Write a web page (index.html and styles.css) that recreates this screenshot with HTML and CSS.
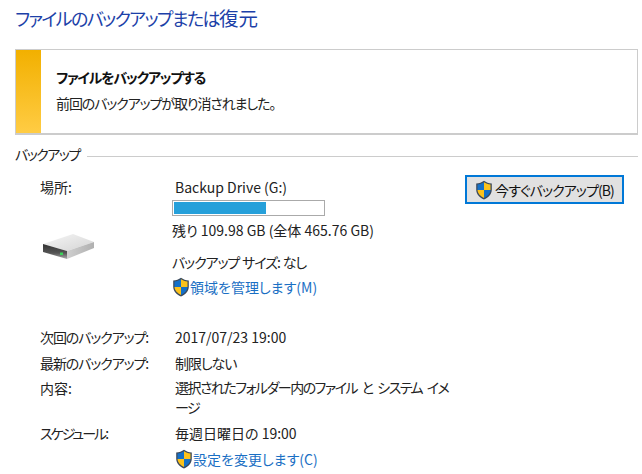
FILE: index.html
```html
<!DOCTYPE html>
<html lang="ja">
<head>
<meta charset="utf-8">
<title>ファイルのバックアップまたは復元</title>
<link rel="stylesheet" href="styles.css">
</head>
<body>
<svg class="defs" width="0" height="0">
  <defs>
    <symbol id="shield" viewBox="0 0 18 20">
      <path d="M9 .8C6.800 2.500 4.200 3.300 1.200 3.400v6.400c0 4.400 3.200 7.900 7.800 9.600 4.600-1.700 7.800-5.200 7.800-9.600V3.400C13.800 3.300 11.200 2.500 9 .8z" fill="#3c4a5c"/>
      <path d="M9 2.300C7.200 3.600 5 4.300 2.500 4.500V10H9z" fill="#1470c8"/>
      <path d="M9 2.300V10h6.500V4.500C13 4.300 10.800 3.600 9 2.300z" fill="#fcc21b"/>
      <path d="M2.500 10c.2 3.500 2.800 6.300 6.500 7.900V10z" fill="#fcc21b"/>
      <path d="M9 10v7.900c3.700-1.600 6.300-4.400 6.500-7.900z" fill="#1470c8"/>
    </symbol>
  </defs>
</svg>
<main class="page">
  <h1 class="title"><span class="title-kana">ファイルのバックアップまたは</span><span class="title-kanji">復元</span></h1>
  <section class="notice">
    <div class="stripe"></div>
    <div class="notice-body">
      <p class="notice-head">ファイルをバックアップする</p>
      <p class="notice-text">前回のバックアップが取り消されました。</p>
    </div>
  </section>
  <div class="legend"><span>バックアップ</span><i class="rule"></i></div>
  <section class="top">
    <div class="col-label">
      <div class="label">場所:</div>
      <svg class="drive" width="52" height="27" viewBox="0 0 52 27">
        <defs>
          <linearGradient id="topface" x1="0" y1="0" x2="1" y2="1">
            <stop offset="0" stop-color="#f6f6f6"/>
            <stop offset="1" stop-color="#d4d4d4"/>
          </linearGradient>
          <linearGradient id="sideface" x1="0" y1="0" x2="1" y2="0">
            <stop offset="0" stop-color="#cfcfcf"/>
            <stop offset="1" stop-color="#b0b0b0"/>
          </linearGradient>
          <linearGradient id="frontface" x1="0" y1="0" x2="0" y2="1">
            <stop offset="0" stop-color="#333"/>
            <stop offset=".6" stop-color="#555"/>
            <stop offset="1" stop-color="#aaa"/>
          </linearGradient>
        </defs>
        <path d="M0 10 30 0 51 8 24 17z" fill="url(#topface)"/>
        <path d="M0 10 24 17 24 25 0 18z" fill="url(#frontface)"/>
        <path d="M24 17 51 8 51 14 24 25z" fill="url(#sideface)"/>
        <rect x="17" y="18.500" width="3" height="2.500" fill="#3ad45a"/>
      </svg>
    </div>
    <div class="col-value">
      <div class="drive-name">Backup Drive (G:)</div>
      <div class="meter"><div class="meter-fill"></div></div>
      <div class="free">残り 109.98 GB (全体 465.76 GB)</div>
      <div class="size cond">バックアップ サイズ: なし</div>
      <a class="link" href="#"><svg class="shield" width="18" height="20"><use href="#shield"/></svg>領域を管理します(M)</a>
    </div>
    <div class="col-action">
      <button class="btn" type="button"><svg class="shield" width="18" height="20"><use href="#shield"/></svg><span class="btn-text">今すぐバックアップ(B)</span></button>
    </div>
  </section>
  <section class="rows">
    <div class="row"><div class="label cond">次回のバックアップ:</div><div class="val">2017/07/23 19:00</div></div>
    <div class="row"><div class="label cond">最新のバックアップ:</div><div class="val cond">制限しない</div></div>
    <div class="row row-tall"><div class="label">内容:</div><div class="val val-wrap">選択されたフォルダー内のファイル と システム イメージ</div></div>
    <div class="row"><div class="label cond-more">スケジュール:</div><div class="val">毎週日曜日の 19:00</div></div>
    <div class="row"><div class="label"></div><a class="link link-row" href="#"><svg class="shield" width="18" height="20"><use href="#shield"/></svg>設定を変更します(C)</a></div>
  </section>
</main>
</body>
</html>
```
FILE: styles.css
```css
* { box-sizing: border-box; }
html, body { margin: 0; padding: 0; background: #fff; }
body {
  width: 642px;
  height: 474px;
  overflow: hidden;
  color: #222;
  font-family: "Noto Sans CJK JP", "Noto Sans", sans-serif;
  font-size: 14px;
  font-feature-settings: "palt";
}
.defs { position: absolute; }
.page { padding: 0 4px 0 15px; }
.cond { letter-spacing: -1.1px; word-spacing: 1px; }
.cond-more { letter-spacing: -2px; }
.title {
  margin: 0;
  padding-top: 1px;
  height: 49px;
  line-height: 26px;
  font-weight: 400;
  color: #1c3fa8;
  white-space: nowrap;
}
.title-kana { font-size: 18px; letter-spacing: -1.6px; }
.title-kanji { font-size: 19.500px; }
.notice {
  display: flex;
  height: 86px;
  border: 1px solid #ccc;
  border-bottom-width: 2px;
}
.stripe {
  width: 25px;
  background: linear-gradient(#f2b000, #ffcc44);
}
.notice-body { padding: 14px 0 0 15px; }
.notice-head { margin: 0; height: 26px; line-height: 26px; font-weight: 700; color: #111; letter-spacing: -1.2px; }
.notice-text { margin: 0; line-height: 26px; letter-spacing: -1.1px; }
.legend {
  display: flex;
  align-items: center;
  gap: 7px;
  height: 26px;
  margin-top: 6px;
  margin-bottom: 9px;
}
.legend span { line-height: 24px; letter-spacing: -1.5px; }
.rule { flex: 1; height: 1px; background: #ccc; margin-top: 4px; }
.top { display: flex; padding-left: 25px; height: 138px; }
.col-label { width: 135px; }
.label { line-height: 22px; }
.drive { display: block; margin: 36px 0 0 3px; }
.col-value { width: 290px; margin-left: -3px; }
.drive-name { padding-left: 3px; line-height: 22px; height: 24px; }
.meter {
  width: 153px;
  height: 16px;
  border: 1px solid #aaa;
  padding: 1px;
  margin-bottom: 3px;
}
.meter-fill { width: 62%; height: 100%; background: #26a0da; }
.free { line-height: 22px; height: 32px; }
.size { line-height: 22px; height: 23px; }
.link {
  display: flex;
  align-items: center;
  height: 26px;
  color: #1a6fc4;
  text-decoration: none;
}
.shield { display: block; flex: none; }
.col-action { margin-left: auto; }
.btn {
  display: flex;
  align-items: center;
  justify-content: center;
  width: 159px;
  height: 29px;
  margin: -1px 14px 0 0;
  padding: 0;
  background: #e1e1e1;
  border: 2px solid #0078d7;
  color: #111;
  font: inherit;
  font-feature-settings: inherit;
}
.btn-text { letter-spacing: -.9px; margin-left: 2px; }
.rows { padding-left: 25px; margin-top: 12px; }
.row { display: flex; height: 25.500px; align-items: flex-start; }
.row .label { width: 135px; flex: none; }
.val { line-height: 22px; }
.val-wrap { width: 278px; line-height: 20px; letter-spacing: -1.5px; word-spacing: 3px; }
.row-tall { height: 45px; }
.link-row { margin-top: -2px; }
```
